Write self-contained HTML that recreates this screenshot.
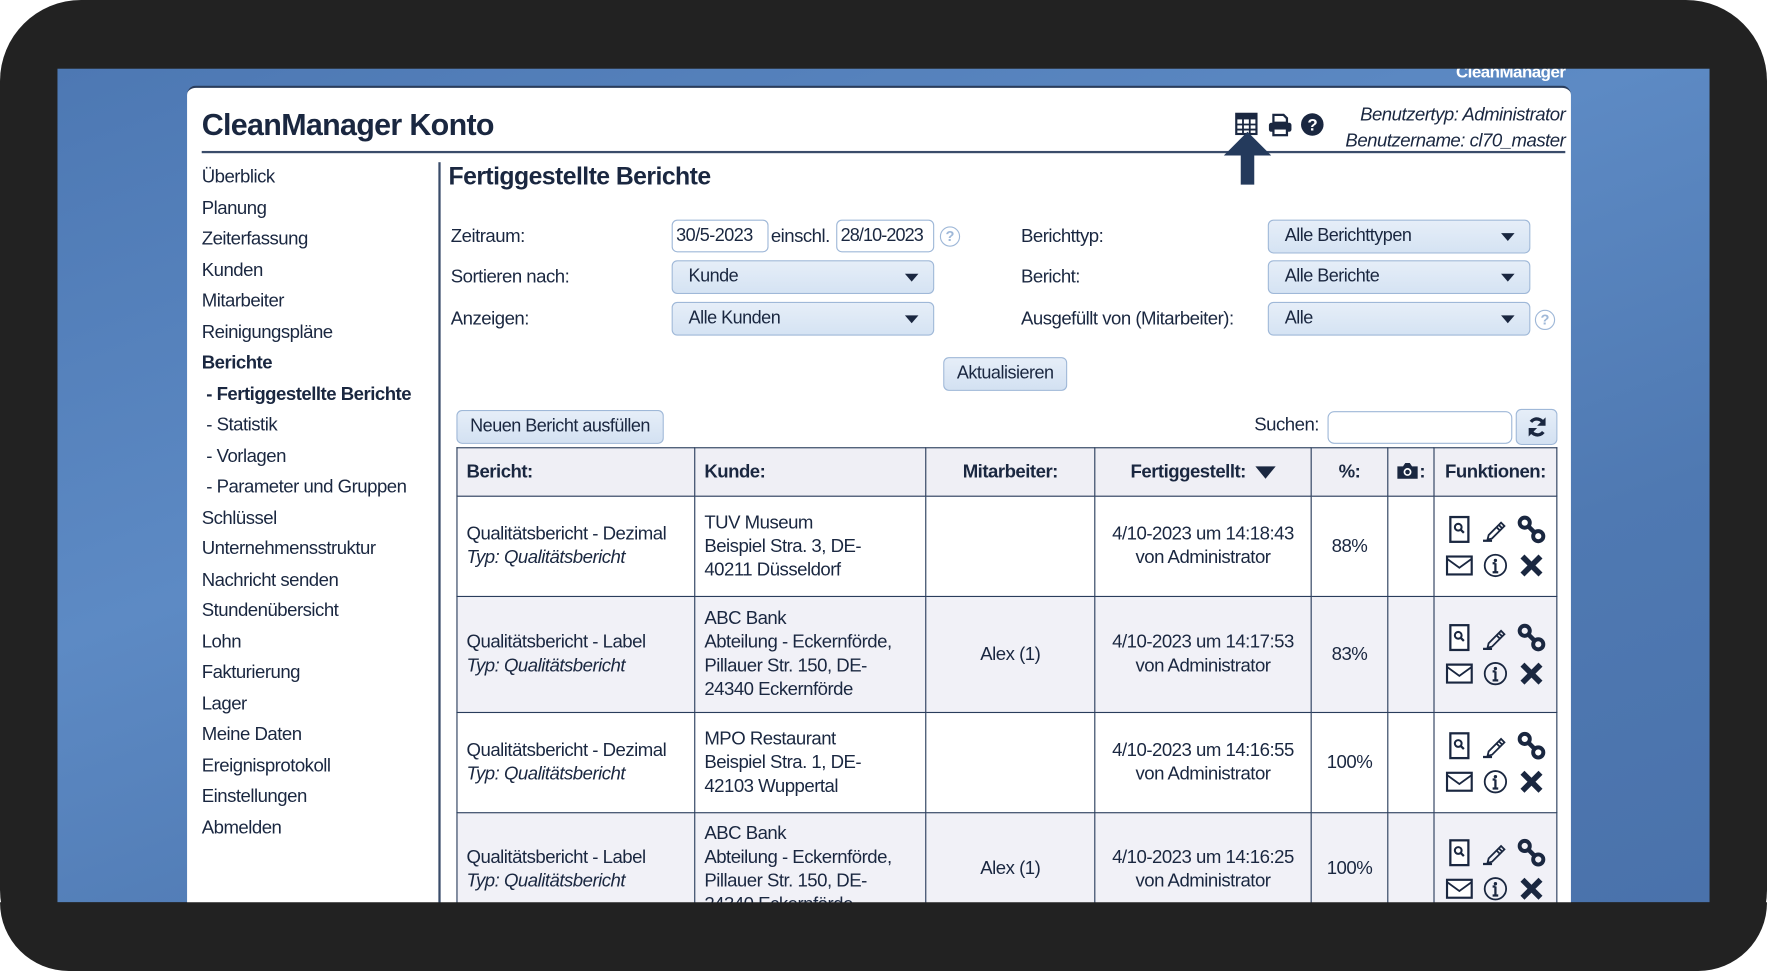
<!DOCTYPE html>
<html><head><meta charset="utf-8"><style>
*{margin:0;padding:0;box-sizing:border-box}
html,body{width:1767px;height:971px;overflow:hidden;background:#fff}
#s{position:absolute;left:0;top:0;width:1568px;height:862px;transform:scale(1.12692,1.12645);transform-origin:0 0;font-family:"Liberation Sans",sans-serif;color:#1a2740;font-size:16.5px;letter-spacing:-0.45px}
.a{position:absolute;white-space:nowrap}
#frame{position:absolute;left:0;top:0;width:1568px;height:862px;background:#222;border-radius:72px}
#blue{position:absolute;left:51px;top:61px;width:1466px;height:740px;background:linear-gradient(160deg,#4d78b3 0%,#5d8ac4 40%,#4f79b2 70%,#4a72ab 100%);overflow:hidden}
#panel{position:absolute;left:166px;top:76px;width:1228px;height:740px;background:#fff;border-radius:8px 8px 0 0;border-top:2px solid #2a3d5c}
.sel{position:absolute;height:30px;background:linear-gradient(#e6eef8,#d5e3f3);border:1px solid #9fb8d8;border-radius:5px;padding:5px 14px;font-size:16px;white-space:nowrap}
.sel:after{content:"";position:absolute;right:13px;top:11px;border-left:6px solid transparent;border-right:6px solid transparent;border-top:7px solid #1a2740}
.inp{position:absolute;height:29px;background:#fff;border:1px solid #9fb8d8;border-radius:5px;padding:5px 3px;font-size:16px;white-space:nowrap;overflow:hidden}
.btn{position:absolute;height:30px;background:linear-gradient(#e6eef8,#d3e1f2);border:1px solid #9fb8d8;border-radius:5px;text-align:center;padding-top:5px;font-size:16px;white-space:nowrap}
.q{position:absolute;width:18px;height:18px;border:1.5px solid #9fb8d8;border-radius:50%;color:#9fb8d8;font-size:13px;text-align:center;line-height:16px;font-weight:bold;letter-spacing:0}
table{position:absolute;left:405px;top:397px;border-collapse:collapse;table-layout:fixed}
td,th{border:1.5px solid #2a3d5c;font-size:16.5px;padding:0 8px;vertical-align:middle;white-space:nowrap}
th{height:43px;background:#efeff5;font-weight:bold}
.r1 td{height:89px}.r2 td{height:103px}.r3 td{height:89px}.r4 td{height:100px}
.alt td{background:#f1f1f7}
td{line-height:21px}
.ic{display:grid;grid-template-columns:32px 32px 32px;justify-content:center;row-gap:8px}
.ic svg{display:block;margin:auto}
.nav div{height:27.5px}
</style></head><body>
<div id="s">
<div id="frame"></div>
<div id="blue">
 <div class="a" style="left:1241px;top:-5px;color:#fff;font-weight:bold;font-size:15px">CleanManager</div>
</div>
<div id="panel"></div>
<div class="a" style="left:179px;top:96px;font-size:27px;font-weight:bold;letter-spacing:-0.6px">CleanManager Konto</div>
<div class="a" style="left:179px;top:134px;width:1210px;height:1.5px;background:#3a4c6a"></div>
<svg class="a" style="left:1096px;top:100px" width="20" height="20" viewBox="0 0 20 20"><rect x="1" y="1" width="18" height="18" fill="none" stroke="#1a2740" stroke-width="2"/><rect x="1" y="1" width="18" height="5" fill="#1a2740"/><path d="M1 10.5h18M1 15h18M7 5v14M13 5v14" stroke="#1a2740" stroke-width="1.6"/></svg>
<svg class="a" style="left:1125px;top:100px" width="22" height="22" viewBox="0 0 22 22"><path d="M5 2h9l3 3v4H5z" fill="none" stroke="#1a2740" stroke-width="2"/><rect x="1" y="9" width="20" height="8" rx="2" fill="#1a2740"/><rect x="5" y="14" width="12" height="6" fill="#fff" stroke="#1a2740" stroke-width="2"/></svg>
<svg class="a" style="left:1154px;top:100px" width="21" height="21" viewBox="0 0 21 21"><circle cx="10.5" cy="10.5" r="10" fill="#1a2740"/><text x="10.5" y="16" text-anchor="middle" fill="#fff" font-family="Liberation Sans" font-weight="bold" font-size="15">?</text></svg>
<svg class="a" style="left:1085px;top:116px" width="44" height="48" viewBox="0 0 44 48"><path d="M22 1L43 22H28V48H16V22H1z" fill="#243a5c"/></svg>
<div class="a" style="left:1150px;top:91px;width:239px;text-align:right;font-style:italic;font-size:16.5px;line-height:23px">Benutzertyp: Administrator<br>Benutzername: cl70_master</div>
<div class="a nav" style="left:179px;top:146px;line-height:22px">
<div>Überblick</div><div>Planung</div><div>Zeiterfassung</div><div>Kunden</div><div>Mitarbeiter</div><div>Reinigungspläne</div><div style="font-weight:bold">Berichte</div><div style="font-weight:bold;padding-left:4px">- Fertiggestellte Berichte</div><div style="padding-left:4px">- Statistik</div><div style="padding-left:4px">- Vorlagen</div><div style="padding-left:4px">- Parameter und Gruppen</div><div>Schlüssel</div><div>Unternehmensstruktur</div><div>Nachricht senden</div><div>Stundenübersicht</div><div>Lohn</div><div>Fakturierung</div><div>Lager</div><div>Meine Daten</div><div>Ereignisprotokoll</div><div>Einstellungen</div><div>Abmelden</div>
</div>
<div class="a" style="left:389px;top:144px;width:1.5px;height:660px;background:#3a4c6a"></div>
<div class="a" style="left:398px;top:144px;font-size:22px;font-weight:bold;letter-spacing:-0.5px">Fertiggestellte Berichte</div>
<div class="a" style="left:400px;top:201px">Zeitraum:</div>
<div class="a" style="left:400px;top:237px">Sortieren nach:</div>
<div class="a" style="left:400px;top:274px">Anzeigen:</div>
<div class="inp" style="left:596px;top:195px;width:86px">30/5-2023</div>
<div class="a" style="left:684px;top:201px">einschl.</div>
<div class="inp" style="left:742px;top:195px;width:87px;letter-spacing:-0.8px">28/10-2023</div>
<div class="q" style="left:834px;top:201px">?</div>
<div class="sel" style="left:596px;top:231px;width:233px">Kunde</div>
<div class="sel" style="left:596px;top:268px;width:233px">Alle Kunden</div>
<div class="a" style="left:906px;top:201px">Berichttyp:</div>
<div class="a" style="left:906px;top:237px">Bericht:</div>
<div class="a" style="left:906px;top:274px">Ausgefüllt von (Mitarbeiter):</div>
<div class="sel" style="left:1125px;top:195px;width:233px">Alle Berichttypen</div>
<div class="sel" style="left:1125px;top:231px;width:233px">Alle Berichte</div>
<div class="sel" style="left:1125px;top:268px;width:233px">Alle</div>
<div class="q" style="left:1362px;top:275px">?</div>
<div class="btn" style="left:837px;top:317px;width:110px">Aktualisieren</div>
<div class="btn" style="left:405px;top:364px;width:184px">Neuen Bericht ausfüllen</div>
<div class="a" style="left:1113px;top:368px">Suchen:</div>
<div class="inp" style="left:1178px;top:365px;width:164px;border-radius:6px"></div>
<div class="btn" style="left:1345px;top:363px;width:37px;height:32px;padding-top:5px"><svg width="20" height="20" viewBox="0 0 20 20"><path d="M16 8A6.5 6.5 0 0 0 4.5 5.5M4 12a6.5 6.5 0 0 0 11.5 2.5" fill="none" stroke="#1a2740" stroke-width="3"/><path d="M17.5 1.5V9H10z M2.5 18.5V11H10z" fill="#1a2740"/></svg></div>
<table>
<colgroup><col style="width:211px"><col style="width:205px"><col style="width:150px"><col style="width:192px"><col style="width:68px"><col style="width:41px"><col style="width:109px"></colgroup>
<tr><th style="text-align:left">Bericht:</th><th style="text-align:left">Kunde:</th><th>Mitarbeiter:</th><th>Fertiggestellt: &nbsp;<span style="display:inline-block;border-left:9px solid transparent;border-right:9px solid transparent;border-top:11px solid #1a2740;vertical-align:middle"></span></th><th>%:</th><th style="padding:0 3px"><svg width="20" height="16" viewBox="0 0 20 16" style="vertical-align:-2px"><path d="M1 4h5l2-3h4l2 3h5v11H1z" fill="#1a2740"/><circle cx="10" cy="9" r="3.5" fill="#fff"/><circle cx="10" cy="9" r="2" fill="#1a2740"/></svg>:</th><th style="padding:0 3px">Funktionen:</th></tr>
<tr class="r1"><td>Qualitätsbericht - Dezimal<br><i>Typ: Qualitätsbericht</i></td><td>TUV Museum<br>Beispiel Stra. 3, DE-<br>40211 Düsseldorf</td><td></td><td style="text-align:center">4/10-2023 um 14:18:43<br>von Administrator</td><td style="text-align:center">88%</td><td></td><td style="padding:0"><div class="ic">ICONS</div></td></tr>
<tr class="r2 alt"><td>Qualitätsbericht - Label<br><i>Typ: Qualitätsbericht</i></td><td>ABC Bank<br>Abteilung - Eckernförde,<br>Pillauer Str. 150, DE-<br>24340 Eckernförde</td><td style="text-align:center">Alex (1)</td><td style="text-align:center">4/10-2023 um 14:17:53<br>von Administrator</td><td style="text-align:center">83%</td><td></td><td style="padding:0"><div class="ic">ICONS</div></td></tr>
<tr class="r3"><td>Qualitätsbericht - Dezimal<br><i>Typ: Qualitätsbericht</i></td><td>MPO Restaurant<br>Beispiel Stra. 1, DE-<br>42103 Wuppertal</td><td></td><td style="text-align:center">4/10-2023 um 14:16:55<br>von Administrator</td><td style="text-align:center">100%</td><td></td><td style="padding:0"><div class="ic">ICONS</div></td></tr>
<tr class="r4 alt"><td>Qualitätsbericht - Label<br><i>Typ: Qualitätsbericht</i></td><td>ABC Bank<br>Abteilung - Eckernförde,<br>Pillauer Str. 150, DE-<br>24340 Eckernförde</td><td style="text-align:center">Alex (1)</td><td style="text-align:center">4/10-2023 um 14:16:25<br>von Administrator</td><td style="text-align:center">100%</td><td></td><td style="padding:0"><div class="ic">ICONS</div></td></tr>
</table>
<div class="a" style="left:0;top:801px;width:1568px;height:61px;background:#222;border-radius:0 0 72px 72px"></div>
</div>
<script>
var I='<svg width="20" height="26" viewBox="0 0 20 26"><rect x="2" y="2" width="16" height="22" fill="#fff" stroke="#1a2740" stroke-width="2"/><circle cx="9" cy="11" r="3" fill="none" stroke="#1a2740" stroke-width="1.8"/><path d="M11 13l3 3" stroke="#1a2740" stroke-width="2"/></svg>'+
'<svg width="24" height="24" viewBox="0 0 24 24"><path d="M6 17l11-11 3 3-11 11-4 1z M15 8l3 3 M13 10l3 3" fill="none" stroke="#1a2740" stroke-width="1.6"/><path d="M1 22h8" stroke="#1a2740" stroke-width="2"/></svg>'+
'<svg width="26" height="26" viewBox="0 0 26 26"><circle cx="7" cy="7" r="4.5" fill="none" stroke="#1a2740" stroke-width="3.5"/><circle cx="19" cy="19" r="4.5" fill="none" stroke="#1a2740" stroke-width="3.5"/><path d="M10 10l6 6" stroke="#1a2740" stroke-width="4"/></svg>'+
'<svg width="24" height="18" viewBox="0 0 24 18"><rect x="1" y="1" width="22" height="16" fill="#fff" stroke="#1a2740" stroke-width="2"/><path d="M1 3l11 8 11-8" fill="none" stroke="#1a2740" stroke-width="1.6"/></svg>'+
'<svg width="22" height="22" viewBox="0 0 22 22"><circle cx="11" cy="11" r="9.5" fill="none" stroke="#1a2740" stroke-width="1.6"/><circle cx="11" cy="6.5" r="1.5" fill="#1a2740"/><path d="M11 9v8M8.5 17h5M8.5 9h2.5" stroke="#1a2740" stroke-width="2"/></svg>'+
'<svg width="22" height="22" viewBox="0 0 22 22"><path d="M3 3l16 16M19 3L3 19" stroke="#1a2740" stroke-width="5"/></svg>';
document.querySelectorAll('.ic').forEach(function(e){e.innerHTML=I});
</script>
</body></html>
